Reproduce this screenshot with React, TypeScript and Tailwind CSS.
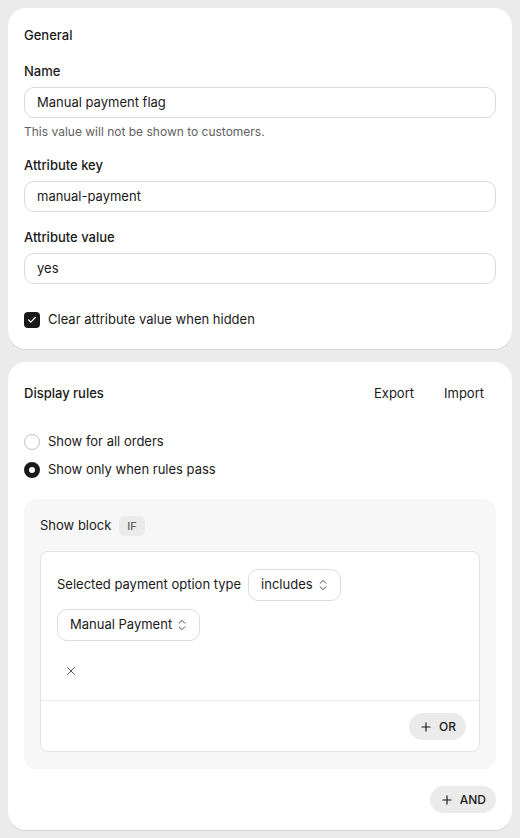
import { Check, ChevronsUpDown, X, Plus } from "lucide-react"

function Field({ label, value, hint, first }: { label: string; value: string; hint?: string; first?: boolean }) {
  return (
    <div className={first ? "mt-[18px]" : "mt-[16px]"}>
      <div className="text-[13px] font-medium leading-[18px] text-[#1a1a1a]">{label}</div>
      <div className="mt-[7px] flex h-[31px] items-center rounded-[10px] border border-[#d9d9d9] bg-white px-[12px] text-[13px] text-[#1a1a1a]">
        {value}
      </div>
      {hint && <div className="mt-[6px] mb-[5px] text-[12px] leading-[16px] text-[#616161]">{hint}</div>}
    </div>
  )
}

function Select({ value }: { value: string }) {
  return (
    <div className="flex h-[32px] items-center gap-[3px] rounded-[10px] border border-[#dcdcdc] bg-white pl-[12px] pr-[10px] text-[13px] text-[#1a1a1a]">
      {value}
      <ChevronsUpDown className="h-[14px] w-[14px] text-[#4a4a4a]" strokeWidth={1.7} />
    </div>
  )
}

export default function App() {
  return (
    <div
      className="min-h-[838px] bg-[#ebebeb] px-[8px] pt-[8px] pb-[8px]"
      style={{ fontFamily: "Inter, 'Noto Sans', sans-serif" }}
    >
      {/* General */}
      <div className="rounded-[18px] bg-white px-[16px] pt-[18px] pb-[21px] shadow-[0_1px_0_#d6d6d6]">
        <div className="text-[13px] font-medium leading-[18px] text-[#1a1a1a]">General</div>
        <Field first label="Name" value="Manual payment flag" hint="This value will not be shown to customers." />
        <Field label="Attribute key" value="manual-payment" />
        <Field label="Attribute value" value="yes" />
        <label className="mt-[28px] flex h-[16px] items-center gap-[8px] text-[13px] text-[#1a1a1a]">
          <span className="flex h-[16px] w-[16px] items-center justify-center rounded-[4px] bg-[#1a1a1a]">
            <Check className="h-[10px] w-[10px] text-white" strokeWidth={3} />
          </span>
          Clear attribute value when hidden
        </label>
      </div>

      {/* Display rules */}
      <div className="mt-[13px] rounded-[18px] bg-white px-[16px] pt-[21px] pb-[17px] shadow-[0_1px_0_#d6d6d6]">
        <div className="flex h-[22px] items-center justify-between">
          <div className="text-[13px] font-medium text-[#1a1a1a]">Display rules</div>
          <div className="flex items-center gap-[10px] pr-[2px] text-[13px] text-[#1a1a1a]">
            <button className="rounded-[8px] px-[10px] py-[2px]">Export</button>
            <button className="rounded-[8px] px-[10px] py-[2px]">Import</button>
          </div>
        </div>

        <div className="mt-[27px] flex flex-col gap-[8px] text-[13px] text-[#1a1a1a]">
          <label className="flex h-[20px] items-center gap-[8px]">
            <span className="h-[16px] w-[16px] rounded-full border border-[#c4c4c4] bg-white" />
            Show for all orders
          </label>
          <label className="flex h-[20px] items-center gap-[8px]">
            <span className="h-[16px] w-[16px] rounded-full border-[5px] border-[#1a1a1a] bg-white" />
            Show only when rules pass
          </label>
        </div>

        <div className="mt-[19px] rounded-[12px] bg-[#f7f7f7] px-[16px] pt-[16px] pb-[17px]">
          <div className="flex h-[22px] items-center gap-[8px] text-[13px] text-[#1a1a1a]">
            Show block
            <span className="flex h-[20px] items-center rounded-[6px] bg-[#ebebeb] px-[8px] text-[11px] font-medium text-[#616161]">IF</span>
          </div>
          <div className="mt-[14px] rounded-[8px] border border-[#e3e3e3] bg-white">
            <div className="px-[16px] pt-[17px] pb-[15px]">
              <div className="flex flex-wrap items-center gap-x-[7px] gap-y-[8px] text-[13px] text-[#1a1a1a]">
                <span>Selected payment option type</span>
                <Select value="includes" />
                <Select value="Manual Payment" />
              </div>
              <div className="mt-[16px] flex h-[28px] w-[28px] items-center justify-center">
                <X className="h-[14px] w-[14px] text-[#4a4a4a]" strokeWidth={1.6} />
              </div>
            </div>
            <div className="flex justify-end border-t border-[#ebebeb] px-[13px] pt-[12px] pb-[11px]">
              <button className="flex h-[27px] items-center gap-[6px] rounded-full bg-[#ebebeb] px-[10px] text-[12px] font-medium text-[#1a1a1a]">
                <Plus className="h-[14px] w-[14px]" strokeWidth={2} />
                OR
              </button>
            </div>
          </div>
        </div>

        <div className="mt-[17px] flex justify-end">
          <button className="flex h-[27px] items-center gap-[6px] rounded-full bg-[#ebebeb] px-[10px] text-[12px] font-medium text-[#1a1a1a]">
            <Plus className="h-[14px] w-[14px]" strokeWidth={2} />
            AND
          </button>
        </div>
      </div>
    </div>
  )
}
